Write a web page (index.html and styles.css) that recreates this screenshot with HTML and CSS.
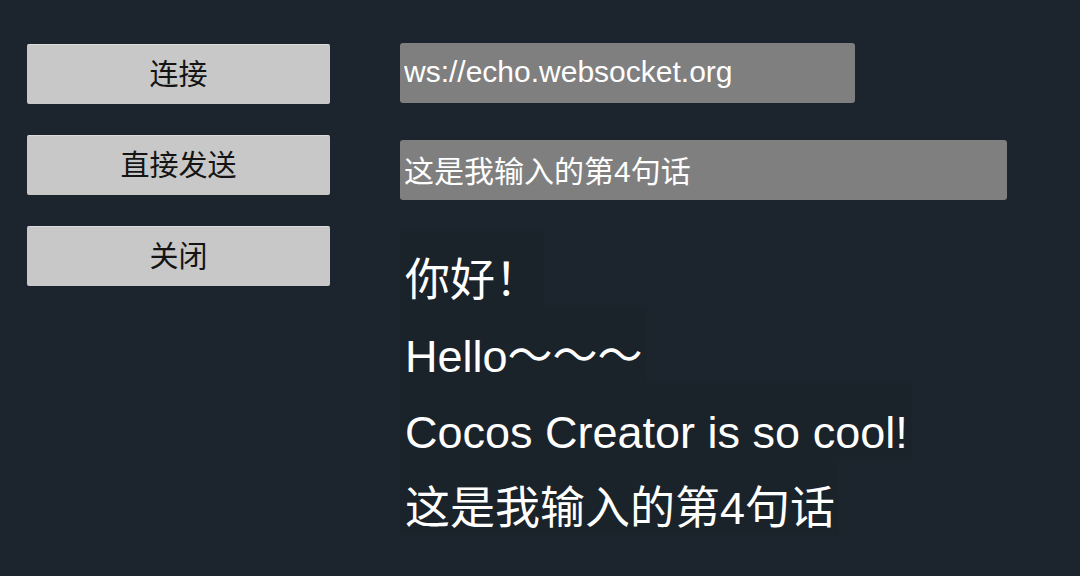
FILE: index.html
```html
<!DOCTYPE html>
<html>

<head>
    <meta charset="utf-8" />
    <title>WebSocket test</title>
    <link rel="stylesheet" href="styles.css">
</head>

<body>
    <div class="layout">
        <div class="buttons">
            <button id="btn-connect">连接</button>
            <button id="btn-send">直接发送</button>
            <button id="btn-close">关闭</button>
        </div>

        <div class="panel">
            <input id="input-url" class="field field-url" value="ws://echo.websocket.org">
            <input id="input-msg" class="field field-msg" value="这是我输入的第4句话">

            <div class="messages">
                <div class="msg">你好！</div>
                <div class="msg">Hello～～～</div>
                <div class="msg">Cocos Creator is so cool!</div>
                <div class="msg">这是我输入的第4句话</div>
            </div>
        </div>
    </div>
</body>

</html>
```

FILE: styles.css
```css
body {
    margin: 0;
    height: 576px;
    background-color: #1c242d;
    font-family: "Liberation Sans", "Noto Sans CJK SC", sans-serif;
    overflow: hidden;
}

.layout {
    display: grid;
    grid-template-columns: 303px 1fr;
    column-gap: 70px;
    padding-left: 27px;
}

.buttons {
    display: flex;
    flex-direction: column;
    gap: 31px;
    padding-top: 44px;
}

button {
    height: 60px;
    width: 100%;
    margin: 0;
    padding: 0 0 5px;
    border: none;
    border-top: 1px solid #dcdcdc;
    border-radius: 2px;
    background-color: #c8c8c8;
    color: #141414;
    font-family: "Noto Sans CJK SC", sans-serif;
    font-size: 29px;
}

.panel {
    display: flex;
    flex-direction: column;
    align-items: flex-start;
    padding-top: 43px;
}

.field {
    box-sizing: border-box;
    height: 60px;
    margin: 0;
    padding: 0 4px 2px;
    border: none;
    border-radius: 3px;
    background-color: #7f7f7f;
    color: #fff;
    font-family: "Liberation Sans", "Noto Sans CJK SC", sans-serif;
    font-size: 30px;
    outline: none;
}

.field-url {
    width: 455px;
}

.field-msg {
    width: 607px;
    margin-top: 37px;
}

.messages {
    display: flex;
    flex-direction: column;
    align-items: flex-start;
    margin-top: 31px;
}

.msg {
    box-sizing: border-box;
    padding: 18px 4px 0 5px;
    height: 76px;
    line-height: 64px;
    background-color: #1a222a;
    color: #fff;
    font-size: 45px;
    white-space: nowrap;
}
```
